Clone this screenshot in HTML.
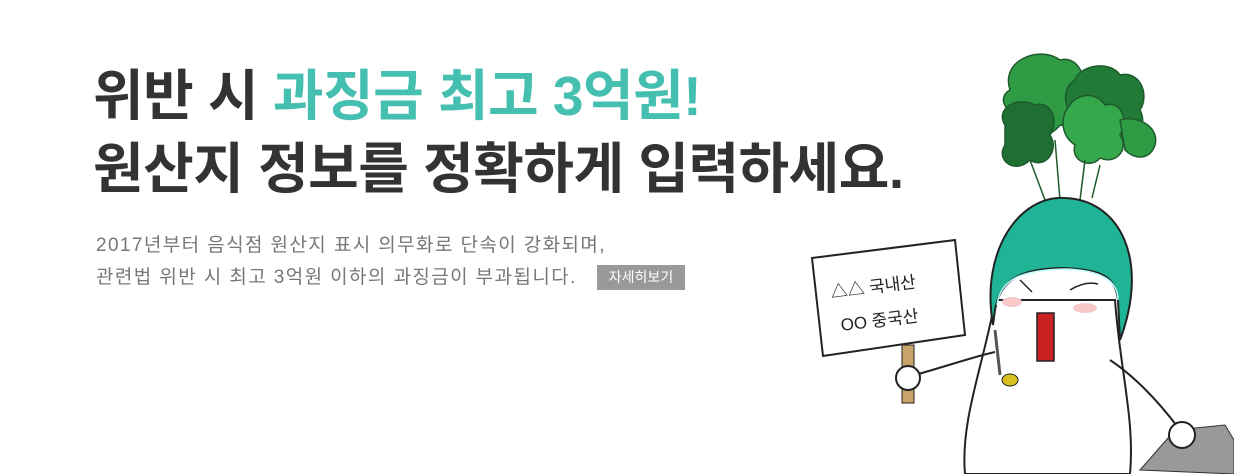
<!DOCTYPE html>
<html><head><meta charset="utf-8"><style>
html,body{margin:0;padding:0;background:#fff;width:1234px;height:474px;overflow:hidden;position:relative;font-family:"Liberation Sans","Noto Sans CJK KR",sans-serif}
.t{position:absolute;left:93px;font-size:55px;font-weight:bold;color:#333;letter-spacing:-0.5px;white-space:nowrap;line-height:66px}
.g{color:#45bfb0}
.s{position:absolute;left:96px;font-size:19px;color:#777;white-space:nowrap;letter-spacing:1.4px;line-height:22px}
.b{position:absolute;left:597px;top:265px;width:88px;height:25px;background:#999;color:#fff;font-size:14px;line-height:25px;text-align:center;letter-spacing:0}
</style></head><body>
<div class="t" style="top:63px">위반 시 <span class="g">과징금 최고 3억원!</span></div>
<div class="t" style="top:136px">원산지 정보를 정확하게 입력하세요.</div>
<div class="s" style="top:235px">2017년부터 음식점 원산지 표시 의무화로 단속이 강화되며,</div>
<div class="s" style="top:267px">관련법 위반 시 최고 3억원 이하의 과징금이 부과됩니다.</div>
<div class="b">자세히보기</div>
<svg style="position:absolute;left:0;top:0" width="1234" height="474" viewBox="0 0 1234 474">
<g stroke="#1d5a2c" stroke-width="1.5">
<path d="M1010 90 C1000 60 1040 45 1060 60 C1075 55 1090 75 1080 95 C1095 110 1080 130 1060 125 C1045 145 1015 135 1020 115 C1000 110 1000 95 1010 90Z" fill="#2f9b45"/>
<path d="M1075 80 C1080 65 1110 60 1120 75 C1140 70 1150 95 1140 110 C1150 130 1130 145 1110 135 C1095 150 1070 135 1075 115 C1060 105 1065 85 1075 80Z" fill="#227a37"/>
<path d="M1005 125 C995 110 1015 95 1035 105 C1050 100 1060 120 1050 135 C1060 150 1045 170 1030 160 C1015 175 995 160 1005 145Z" fill="#1f6f33"/>
<path d="M1070 105 C1075 95 1095 90 1105 105 C1120 100 1130 120 1120 135 C1130 150 1115 165 1100 158 C1090 170 1070 160 1075 145 C1060 135 1060 115 1070 105Z" fill="#34a84b"/>
<path d="M1120 120 C1135 115 1160 125 1155 145 C1150 160 1135 160 1125 150 Z" fill="#2f9b45"/>
<path d="M1030 160 L1045 200 M1055 140 L1060 200 M1085 160 L1080 200 M1100 165 L1092 198" fill="none"/>
</g>
<path d="M995 300 C985 360 960 420 965 474 L1130 474 C1135 420 1120 370 1115 300 Z" fill="#fff" stroke="#222" stroke-width="2"/>
<path d="M993 325 C980 250 1020 195 1065 198 C1120 200 1150 260 1120 340 L1118 300 C1115 275 1100 270 1065 268 C1020 268 1000 280 995 310 Z" fill="#1fb495" stroke="#222" stroke-width="2"/>
<path d="M997 305 C1000 280 1020 270 1065 269 C1100 270 1118 280 1118 300" fill="none" stroke="#bff" stroke-width="1.5"/>
<ellipse cx="1012" cy="302" rx="10" ry="5" fill="#f8c8c8"/>
<ellipse cx="1085" cy="308" rx="12" ry="5" fill="#f8c8c8"/>
<rect x="1037" y="313" width="17" height="48" fill="#c82222" stroke="#222" stroke-width="1.5"/>
<path d="M1020 280 L1032 292 M1070 290 C1080 284 1090 282 1098 284" stroke="#222" stroke-width="1.5" fill="none"/>
<ellipse cx="1010" cy="380" rx="8" ry="6" fill="#d8c020" stroke="#222"/>
<path d="M995 330 L1000 375" stroke="#555" stroke-width="3"/>
<rect x="902" y="345" width="12" height="58" fill="#c9a46a" stroke="#222"/>
<path d="M812 258 L955 240 L965 335 L823 356 Z" fill="#fff" stroke="#222" stroke-width="2"/>
<text x="832" y="292" font-size="17" fill="#222" transform="rotate(-7 880 300)">△△ 국내산</text>
<text x="838" y="326" font-size="17" fill="#222" transform="rotate(-7 880 300)">OO 중국산</text>
<path d="M915 375 C950 365 980 355 995 352" stroke="#222" stroke-width="2" fill="none"/>
<circle cx="908" cy="378" r="12" fill="#fff" stroke="#222" stroke-width="2"/>
<path d="M1140 470 L1175 430 L1225 425 L1234 440 L1234 474 Z" fill="#999" stroke="#333"/>
<path d="M1110 360 C1140 380 1165 410 1180 430" stroke="#222" stroke-width="2" fill="none"/>
<circle cx="1182" cy="435" r="13" fill="#fff" stroke="#222" stroke-width="2"/>
</svg>
</body></html>
